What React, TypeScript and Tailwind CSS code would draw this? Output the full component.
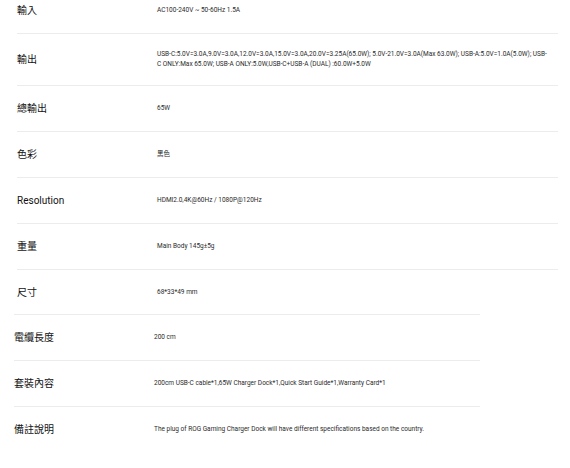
const SPECS_TOP = [
  { label: "輸入", value: "AC100-240V ~ 50-60Hz 1.5A" },
  {
    label: "輸出",
    value:
      "USB-C:5.0V=3.0A,9.0V=3.0A,12.0V=3.0A,15.0V=3.0A,20.0V=3.25A(65.0W); 5.0V-21.0V=3.0A(Max 63.0W); USB-A:5.0V=1.0A(5.0W); USB-C ONLY:Max 65.0W; USB-A ONLY:5.0W,USB-C+USB-A (DUAL) :60.0W+5.0W",
  },
  { label: "總輸出", value: "65W" },
  { label: "色彩", value: "黑色" },
  { label: "Resolution", value: "HDMI2.0,4K@60Hz / 1080P@120Hz" },
  { label: "重量", value: "Main Body 145g±5g" },
  { label: "尺寸", value: "68*33*49 mm" },
];

const SPECS_BOTTOM = [
  { label: "電纜長度", value: "200 cm" },
  { label: "套裝內容", value: "200cm USB-C cable*1,65W Charger Dock*1,Quick Start Guide*1,Warranty Card*1" },
  { label: "備註說明", value: "The plug of ROG Gaming Charger Dock will have different specifications based on the country." },
];

const font = { fontFamily: 'Roboto, "Noto Sans CJK TC", sans-serif' };

function Row({ label, value, pad }: { label: string; value: string; pad: string }) {
  return (
    <div className={`flex items-center ${pad}`}>
      <div className="w-[140px] shrink-0 text-[10px] leading-[13px] text-[#111]">{label}</div>
      <div className="flex-1 pr-[8px] text-[6.5px] leading-[9.5px] text-[#2a2a2a]">{value}</div>
    </div>
  );
}

export default function App() {
  return (
    <div className="w-[570px] h-[468px] bg-white overflow-hidden" style={font}>
      {/* upper table */}
      <div className="ml-[17px] w-[541px]">
        {SPECS_TOP.map((s, i) => {
          const last = i === SPECS_TOP.length - 1;
          const pad = i === 0 ? "pt-[4px] pb-4" : last ? "pt-4 pb-[15px]" : "py-4";
          return (
            <div key={s.label} className={last ? "" : "border-b border-[#ececec]"}>
              <Row label={s.label} value={s.value} pad={pad} />
            </div>
          );
        })}
      </div>
      {/* lower table */}
      <div className="ml-[14px] w-[466px]">
        {SPECS_BOTTOM.map((s) => (
          <div key={s.label} className="border-t border-[#ececec]">
            <Row label={s.label} value={s.value} pad="py-4" />
          </div>
        ))}
      </div>
    </div>
  );
}
